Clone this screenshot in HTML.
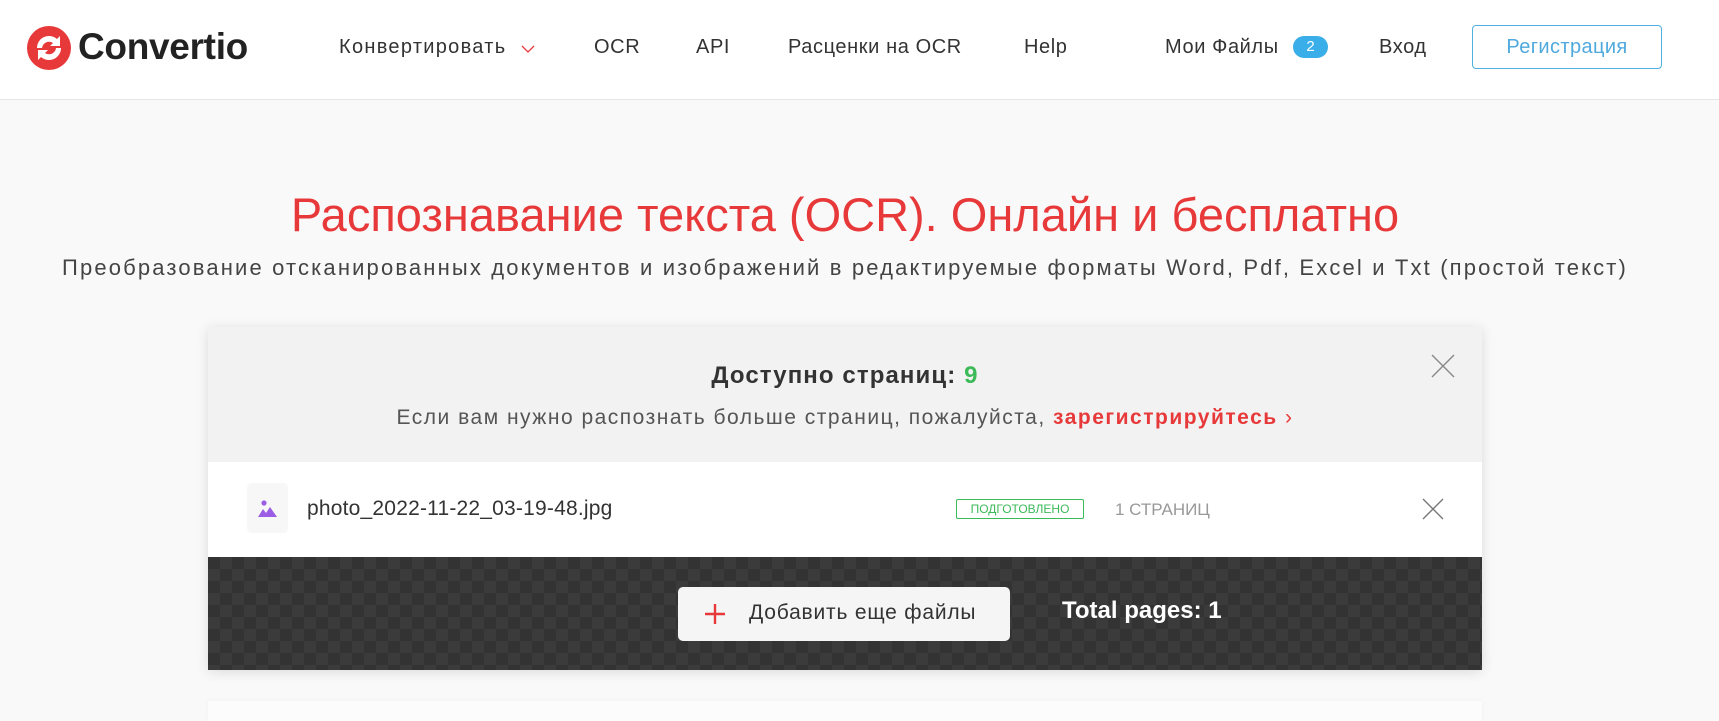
<!DOCTYPE html>
<html><head><meta charset="utf-8"><style>
*{margin:0;padding:0;box-sizing:border-box}
body{width:1719px;height:714px;overflow:hidden;background:#f9f9f9;font-family:"Liberation Sans",sans-serif;color:#333;position:relative}
.a{position:absolute;white-space:nowrap}
header{position:absolute;left:0;top:0;width:1719px;height:100px;background:#fff;border-bottom:1px solid #e6e6e6}
.nav{font-size:20px;color:#333;top:36px;letter-spacing:0.6px}
.panel{position:absolute;left:208px;top:327px;width:1274px;height:343px;box-shadow:0 2px 12px rgba(0,0,0,.12)}
.gray{position:absolute;left:0;top:0;width:100%;height:135px;background:#f2f2f2}
.white{position:absolute;left:0;top:135px;width:100%;height:95px;background:#fff}
.dark{position:absolute;left:0;top:230px;width:100%;height:113px;background-color:#333;
background-image:linear-gradient(45deg,#3b3b3b 25%,transparent 25%,transparent 75%,#3b3b3b 75%),linear-gradient(45deg,#3b3b3b 25%,transparent 25%,transparent 75%,#3b3b3b 75%);
background-size:24px 24px;background-position:0 0,12px 12px}
</style></head><body>
<header>
<svg class="a" style="left:27px;top:26px" width="44" height="44" viewBox="0 0 44 44">
<circle cx="22" cy="22" r="22" fill="#e8393a"/>
<path d="M10 22a12 12 0 0 1 20-9l3-3v10h-10l3-3a7 7 0 0 0-11 5z" fill="#fff"/>
<path d="M34 22a12 12 0 0 1-20 9l-3 3v-10h10l-3 3a7 7 0 0 0 11-5z" fill="#fff"/>
</svg>
<div class="a" style="left:78px;top:26px;font-size:37px;font-weight:bold;color:#222;letter-spacing:-0.3px">Convertio</div>
<div class="a nav" style="left:339px;letter-spacing:1.3px">Конвертировать</div>
<svg class="a" style="left:521px;top:45px" width="14" height="9" viewBox="0 0 14 9"><path d="M1 1l6 6 6-6" stroke="#e8393a" stroke-width="1.3" fill="none"/></svg>
<div class="a nav" style="left:594px">OCR</div>
<div class="a nav" style="left:696px">API</div>
<div class="a nav" style="left:788px">Расценки на OCR</div>
<div class="a nav" style="left:1024px">Help</div>
<div class="a nav" style="left:1165px">Мои Файлы</div>
<div class="a" style="left:1293px;top:36px;width:35px;height:22px;border-radius:11px;background:#3aaee8;color:#fff;font-size:15px;text-align:center;line-height:22px">2</div>
<div class="a nav" style="left:1379px">Вход</div>
<div class="a" style="left:1472px;top:25px;width:190px;height:44px;border:1px solid #4fb0e0;border-radius:4px;color:#4fa9dd;font-size:20px;text-align:center;line-height:42px;letter-spacing:0.4px">Регистрация</div>
</header>
<div class="a" style="left:0;width:1690px;text-align:center;top:187px;font-size:47px;color:#e8393a">Распознавание текста (OCR). Онлайн и бесплатно</div>
<div class="a" style="left:0;width:1690px;text-align:center;top:255px;font-size:22px;color:#444;letter-spacing:2.15px">Преобразование отсканированных документов и изображений в редактируемые форматы Word, Pdf, Excel и Txt (простой текст)</div>
<div class="a" style="left:208px;top:701px;width:1274px;height:20px;background:#fcfcfc;box-shadow:0 0 6px rgba(0,0,0,.04)"></div>
<div class="panel">
<div class="gray">
<div class="a" style="left:0;width:100%;text-align:center;top:35px;font-size:24px;font-weight:bold;color:#333;letter-spacing:1.1px">Доступно страниц: <span style="color:#3dba58">9</span></div>
<div class="a" style="left:0;width:100%;text-align:center;top:79px;font-size:21px;color:#555;letter-spacing:1.5px">Если вам нужно распознать больше страниц, пожалуйста, <b style="color:#e8393a">зарегистрируйтесь</b> <span style="color:#e8393a">›</span></div>
<svg class="a" style="left:1223px;top:27px" width="24" height="24" viewBox="0 0 24 24"><path d="M1 1l22 22M23 1L1 23" stroke="#888" stroke-width="1.4"/></svg>
</div>
<div class="white">
<div class="a" style="left:40px;top:22px;width:39px;height:48px;background:#f7f7f7;border-radius:3px;box-shadow:0 0 2px rgba(0,0,0,.08)"></div>
<svg class="a" style="left:50px;top:38px" width="19" height="17" viewBox="0 0 19 17"><circle cx="6" cy="3" r="2.6" fill="#9b5de5"/><path d="M0 17l5-8 3 4 4-6 7 10z" fill="#9b5de5"/></svg>
<div class="a" style="left:99px;top:35px;font-size:21px;color:#333;letter-spacing:0.2px">photo_2022-11-22_03-19-48.jpg</div>
<div class="a" style="left:748px;top:37px;width:128px;height:20px;border:1px solid #3dba58;border-radius:2px;color:#3dba58;font-size:12px;text-align:center;line-height:18px">ПОДГОТОВЛЕНО</div>
<div class="a" style="left:907px;top:38px;font-size:17px;color:#999">1 СТРАНИЦ</div>
<svg class="a" style="left:1214px;top:36px" width="22" height="22" viewBox="0 0 22 22"><path d="M1 1l20 20M21 1L1 21" stroke="#777" stroke-width="1.4"/></svg>
</div>
<div class="dark">
<div class="a" style="left:470px;top:30px;width:332px;height:54px;background:#f5f5f5;border-radius:5px"></div>
<svg class="a" style="left:497px;top:47px" width="20" height="20" viewBox="0 0 20 20"><path d="M10 0v20M0 10h20" stroke="#e8393a" stroke-width="2.4"/></svg>
<div class="a" style="left:541px;top:44px;font-size:21px;color:#333;letter-spacing:0.8px">Добавить еще файлы</div>
<div class="a" style="left:854px;top:40px;font-size:24px;font-weight:bold;color:#fff">Total pages: 1</div>
</div>
</div>
</body></html>
